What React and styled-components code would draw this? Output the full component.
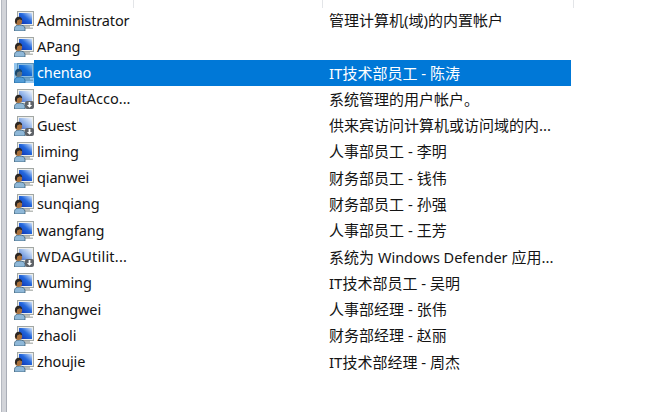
import React from 'react';
import styled, { createGlobalStyle } from 'styled-components';

const GlobalStyle = createGlobalStyle`
  html, body {
    margin: 0;
    padding: 0;
    background: #fff;
    overflow: hidden;
  }
`;

const Page = styled.div`
  display: flex;
  width: 666px;
  height: 412px;
  overflow: hidden;
  background: #fff;
  font-family: "Noto Sans", "Noto Sans CJK SC", sans-serif;
  font-size: 15px;
  color: #141414;
`;

const Rail = styled.div`
  flex: none;
  width: 8px;
  box-sizing: border-box;
  border-left: 1px solid #fff;
  background: linear-gradient(to right, #b4b8c0 0 1px, #d2d4d9 1px 5px, #a9adb6 5px 6px, #fff 6px);
`;

const Main = styled.div`
  flex: 1;
  min-width: 0;
`;

const Header = styled.div`
  display: grid;
  grid-template-columns: 126px 189px 251px;
  height: 7.5px;
  overflow: hidden;
`;

const HeaderCell = styled.div`
  display: flex;
  align-items: flex-end;
  height: 7.5px;
  box-sizing: border-box;
  padding-left: ${(p) => p.$indent}px;
  border-right: 1px solid #e3e5e8;
  font-size: 12px;
  line-height: 16px;
  color: #9a9fa6;
`;

const HeaderText = styled.span`
  margin-bottom: 6.5px;
`;

const List = styled.div`
  padding-left: 6px;
`;

const Row = styled.div`
  display: grid;
  grid-template-columns: 20px 295px 242px;
  align-items: center;
  height: 26.27px;
`;

const IconBox = styled.div`
  position: relative;
  width: 20px;
  height: 20px;

  svg {
    display: block;
    filter: blur(0.2px);
  }

  ${(p) =>
    p.$selected &&
    `
    &::after {
      content: "";
      position: absolute;
      inset: 0;
      background: rgba(0, 120, 215, 0.42);
    }
  `}
`;

const Cell = styled.div`
  display: flex;
  align-items: center;
  box-sizing: border-box;
  height: 100%;
  padding-left: ${(p) => p.$indent}px;
  padding-bottom: 2px;
  white-space: pre;
  overflow: hidden;
  background: ${(p) => (p.$selected ? '#0078d7' : 'transparent')};
  color: ${(p) => (p.$selected ? '#fff' : 'inherit')};
`;

const NameCell = styled(Cell)`
  font-size: 14.5px;
  letter-spacing: ${(p) => p.$tracking}px;
`;

const Latin = styled.span`
  font-size: 14.5px;
`;

function UserIcon({ disabled }) {
  const gid = disabled ? 'scrOff' : 'scrOn';
  return (
    <svg width="20" height="20" viewBox="0 0 20 20">
      <defs>
        <linearGradient id={gid} x1="0" y1="1" x2="1" y2="0">
          <stop offset="0" stopColor={disabled ? '#3f68c8' : '#0a2cae'} />
          <stop offset="0.55" stopColor={disabled ? '#9dbcec' : '#2468dc'} />
          <stop offset="1" stopColor={disabled ? '#f2f6fc' : '#d2e4fa'} />
        </linearGradient>
      </defs>
      {/* monitor */}
      <rect x="3.5" y="0.5" width="16" height="14" fill="#eceeec" stroke="#a2a7a4" />
      <rect x="5" y="2" width="13" height="11" fill={`url(#${gid})`} />
      <path d="M9 15h7v1.5h3V18H9z" fill="#b9bdba" />
      {/* user */}
      <path d="M0.5 20v-2.5c0-2.5 2-3.5 5-3.5s5.5 1 5.5 3.5V20z" fill="#8fb8d8" stroke="#3b5f7a" strokeWidth="0.8" />
      <circle cx="4.5" cy="10.5" r="3.6" fill="#a9713c" />
      <path d="M1 10c0-3 1.8-4.2 3.7-4.2S8.2 7 8.2 9.2L5.5 8.2 3.2 9.4 2.6 13C1.6 12.4 1 11.5 1 10z" fill="#2b2622" />
      {disabled && (
        <g>
          <rect x="11" y="12" width="9" height="8" rx="2" fill="#5f6368" />
          <path d="M14.6 13h1.8v3h1.7l-2.6 2.8-2.6-2.8h1.7z" fill="#fff" />
        </g>
      )}
    </svg>
  );
}

const users = [
  { name: 'Administrator', desc: '管理计算机(域)的内置帐户' },
  { name: 'APang', desc: '' },
  { name: 'chentao', desc: 'IT技术部员工 - 陈涛', selected: true },
  { name: 'DefaultAcco...', desc: '系统管理的用户帐户。', disabled: true, tracking: 0 },
  { name: 'Guest', desc: '供来宾访问计算机或访问域的内...', disabled: true },
  { name: 'liming', desc: '人事部员工 - 李明' },
  { name: 'qianwei', desc: '财务部员工 - 钱伟' },
  { name: 'sunqiang', desc: '财务部员工 - 孙强' },
  { name: 'wangfang', desc: '人事部员工 - 王芳' },
  {
    name: 'WDAGUtilit...',
    desc: (
      <>
        系统为 <Latin>Windows Defender</Latin> 应用...
      </>
    ),
    disabled: true,
    tracking: 0.22,
  },
  { name: 'wuming', desc: 'IT技术部员工 - 吴明' },
  { name: 'zhangwei', desc: '人事部经理 - 张伟' },
  { name: 'zhaoli', desc: '财务部经理 - 赵丽' },
  { name: 'zhoujie', desc: 'IT技术部经理 - 周杰' },
];

export default function App() {
  return (
    <Page>
      <GlobalStyle />
      <Rail />
      <Main>
        <Header>
          <HeaderCell $indent={12}><HeaderText>名称</HeaderText></HeaderCell>
          <HeaderCell $indent={12}><HeaderText>全名</HeaderText></HeaderCell>
          <HeaderCell $indent={8}><HeaderText>描述</HeaderText></HeaderCell>
        </Header>
        <List>
          {users.map((u) => (
            <Row key={u.name}>
              <IconBox $selected={u.selected}>
                <UserIcon disabled={u.disabled} />
              </IconBox>
              <NameCell $indent={3} $selected={u.selected} $tracking={u.tracking ?? -0.14}>{u.name}</NameCell>
              <Cell $indent={0} $selected={u.selected}><span>{u.desc}</span></Cell>
            </Row>
          ))}
        </List>
      </Main>
    </Page>
  );
}
